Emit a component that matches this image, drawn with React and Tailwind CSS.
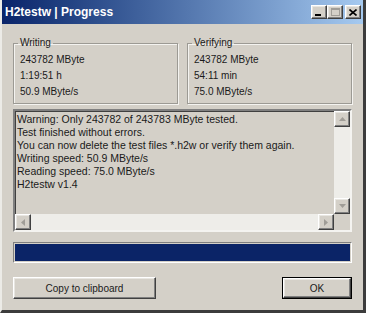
import React from 'react';

const raised =
  'border border-t-white border-l-white border-r-[#404040] border-b-[#404040] shadow-[inset_-1px_-1px_0_#808080,inset_1px_1px_0_#e8e6e1]';

const Arrow = ({ dir }) => {
  const pts = {
    up: '0,4 3.5,0 7,4',
    down: '0,0 3.5,4 7,0',
    left: '4,0 0,3.5 4,7',
    right: '0,0 4,3.5 0,7',
  }[dir];
  const vertical = dir === 'up' || dir === 'down';
  return (
    <div className={`w-[16px] h-[16px] shrink-0 flex items-center justify-center bg-[#d4d0c8] ${raised}`}>
      <svg width={vertical ? 7 : 4} height={vertical ? 4 : 7}>
        <polygon points={pts} fill="#a09d97" />
      </svg>
    </div>
  );
};

const GroupBox = ({ title, rows }) => (
  <fieldset className="w-[165px] border border-[#9c9a94] shadow-[inset_1px_1px_0_#f4f3f0,1px_1px_0_#f4f3f0] pl-[4px] pb-[3px]">
    <legend className="px-[2px] leading-[12px] text-[#1a1a1a]">{title}</legend>
    <div className="mt-[3px] ml-[2px] flex flex-col">
      {rows.map((r) => (
        <div key={r} className="leading-[16px] text-[#1a1a1a]">
          {r}
        </div>
      ))}
    </div>
  </fieldset>
);

const CaptionButton = ({ children, className = '' }) => (
  <div className={`w-[16px] h-[14px] bg-[#d4d0c8] flex items-center justify-center ${raised} ${className}`}>
    {children}
  </div>
);

const lines = [
  'Warning: Only 243782 of 243783 MByte tested.',
  'Test finished without errors.',
  'You can now delete the test files *.h2w or verify them again.',
  'Writing speed: 50.9 MByte/s',
  'Reading speed: 75.0 MByte/s',
  'H2testw v1.4',
];

export default function App() {
  return (
    <div className="w-[366px] h-[313px] flex flex-col bg-[#d4d0c8] border-l-2 border-l-[#ecebe7] border-r-[3px] border-r-[#3c3c3c] border-b-[3px] border-b-[#3c3c3c] font-['Liberation_Sans',Arial,sans-serif] text-[10px] overflow-hidden">
      <div className="h-[24px] shrink-0 flex items-center justify-between pl-[3px] pr-[2px] bg-linear-to-r from-[#0a246a] to-[#a6caf0]">
        <span className="text-white font-bold text-[12px] leading-none">H2testw | Progress</span>
        <div className="flex items-center">
          <CaptionButton>
            <div className="w-[6px] h-[2px] bg-black mt-[6px] mr-[3px]" />
          </CaptionButton>
          <CaptionButton>
            <div className="w-[9px] h-[8px] border border-t-2 border-[#a09d97]" />
          </CaptionButton>
          <CaptionButton className="ml-[2px]">
            <svg width="8" height="7" viewBox="0 0 8 7">
              <path d="M0.5 0.5 L7.5 6.5 M7.5 0.5 L0.5 6.5" stroke="black" strokeWidth="1.6" />
            </svg>
          </CaptionButton>
        </div>
      </div>

      <div className="flex-1 flex flex-col px-[11px] pt-[13px]">
        <div className="flex justify-between">
          <GroupBox title="Writing" rows={['243782 MByte', '1:19:51 h', '50.9 MByte/s']} />
          <GroupBox title="Verifying" rows={['243782 MByte', '54:11 min', '75.0 MByte/s']} />
        </div>

        <div className="mt-[5px] h-[123px] flex flex-col border-2 border-t-[#808080] border-l-[#808080] border-r-[#f4f3f0] border-b-[#f4f3f0] shadow-[inset_1px_1px_0_#404040]">
          <div className="flex-1 flex min-h-0">
            <div className="flex-1 pl-[2px] pt-[2px] text-[10.5px] text-[#1a1a1a]">
              {lines.map((l) => (
                <div key={l} className="leading-[13px] whitespace-nowrap">
                  {l}
                </div>
              ))}
            </div>
            <div className="w-[16px] flex flex-col bg-[#eeede9]">
              <Arrow dir="up" />
              <div className="flex-1" />
              <Arrow dir="down" />
            </div>
          </div>
          <div className="h-[16px] flex">
            <div className="flex-1 flex bg-[#eeede9]">
              <Arrow dir="left" />
              <div className="flex-1" />
              <Arrow dir="right" />
            </div>
            <div className="w-[16px] bg-[#d4d0c8]" />
          </div>
        </div>

        <div className="mt-[10px] h-[21px] border border-t-[#808080] border-l-[#808080] border-r-white border-b-white p-[1px]">
          <div className="h-full bg-[#0b2467]" />
        </div>

        <div className="mt-[14px] flex justify-between">
          <button className={`w-[143px] h-[22px] bg-[#d4d0c8] text-[#1a1a1a] ${raised}`}>Copy to clipboard</button>
          <div className="border border-black">
            <button className={`w-[68px] h-[20px] bg-[#d4d0c8] text-[#1a1a1a] ${raised}`}>OK</button>
          </div>
        </div>
      </div>
    </div>
  );
}
